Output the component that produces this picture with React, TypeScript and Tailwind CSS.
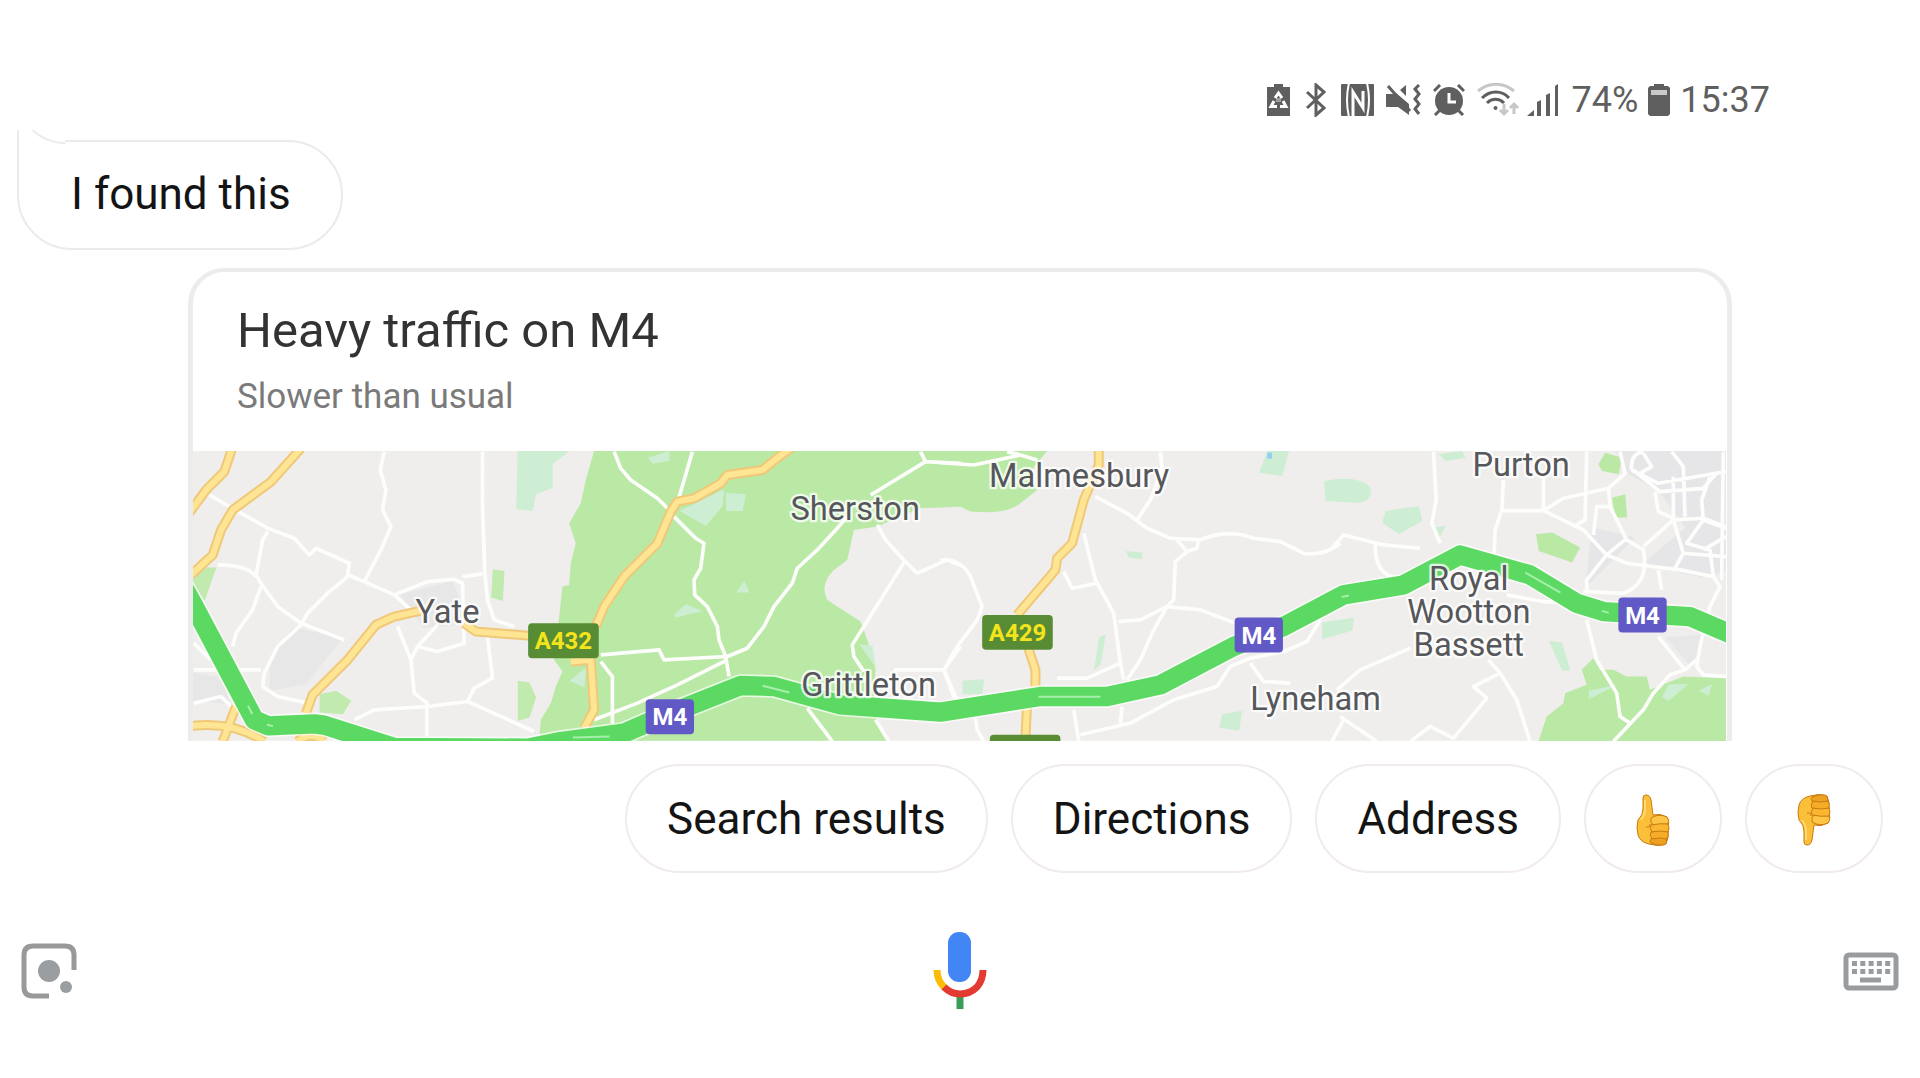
import type { ReactNode } from 'react';

const chips = ['Search results', 'Directions', 'Address'];

const motorway =
  'M-30 407L2 464L184 807L226 825L364 819L394 823L604 890L1004 892L1104 872L1294 847L1404 799L1644 704L1744 707L1944 762L2244 784L2544 737L2744 737L2904 702L3124 587L3274 527L3454 432L3634 402L3804 312L4014 372L4154 457L4234 482L4494 497L4640 560';

function StatusIcons() {
  return (
    <div className="flex items-center text-[#5f5f5f]">
      {/* Battery recycling */}
      <svg className="mr-4 h-8 w-[23px]" viewBox="0 0 23 32" fill="currentColor">
        <path d="M7 0h9v3h7v29H0V3h7z" />
        <g fill="none" stroke="#fff" strokeWidth="3">
          <path d="M8 14L11.500 9L15 14M7 17L4 22.500H10M16 17L19 22.500H13" />
        </g>
        <path d="M9 14h5v4H9z" fill="#fff" opacity=".4" />
      </svg>
      {/* Bluetooth */}
      <svg className="mr-[14px] h-[34px] w-[21px]" viewBox="0 0 21 34" fill="none" stroke="currentColor" strokeWidth="3">
        <path d="M1 9l17 16-8 7V2l8 7L1 25" />
      </svg>
      {/* NFC */}
      <svg className="mr-3 h-8 w-[33px]" viewBox="0 0 33 32">
        <rect width="33" height="32" rx="1" fill="currentColor" />
        <g fill="none" stroke="#fff">
          <path d="M8 -1Q4 16 8 33M26 -1Q30 16 26 33" strokeWidth="2" />
          <path d="M12 33V8L22 24V7" strokeWidth="3" />
        </g>
      </svg>
      {/* Muted, vibrating */}
      <svg className="mr-[11px] h-8 w-9" viewBox="0 0 36 32">
        <path d="M0 10h7l3-1 13 11v11l-11-8H0zM20 1v11l-6-6z" fill="currentColor" />
        <path d="M2 2l22 25" stroke="currentColor" strokeWidth="3" />
        <path d="M33 1l-4 4 4 5-4 5 4 5-4 5 4 5" fill="none" stroke="currentColor" strokeWidth="3" />
      </svg>
      {/* Alarm */}
      <svg className="mr-3 h-8 w-8" viewBox="0 0 32 32">
        <circle cx="16" cy="17" r="14" fill="currentColor" />
        <path d="M1 7l6-6M31 7l-6-6M7 26l-5 5M25 26l5 5" stroke="currentColor" strokeWidth="3" />
        <path d="M16 9v9h7" fill="none" stroke="#fff" strokeWidth="3" />
      </svg>
      {/* Wifi with traffic arrows */}
      <svg className="mr-1 h-[34px] w-[46px]" viewBox="0 0 46 34" fill="none" stroke="currentColor" strokeWidth="3">
        <path d="M1 8C12-1 26-1 37 8" opacity=".35" />
        <path d="M5 15c8-8 20-8 27 0M10 20c5-5 12-5 17 0" />
        <circle cx="18.500" cy="25" r="2" fill="currentColor" stroke="none" />
        <path d="M27 21v9m-4-3l4 4 4-4M37 31v-9m-4 3l4-4 4 4" opacity=".35" />
      </svg>
      {/* Signal */}
      <svg className="mr-[13px] h-8 w-8" viewBox="0 0 32 32" fill="currentColor">
        <path d="M0 32l7-6v6zM10 18l4-2v16h-4zM19 11l4-2v23h-4zM28 2l3-2v32h-3z" />
      </svg>
    </div>
  );
}

function Battery() {
  return (
    <svg className="mx-[10px] h-8 w-[22px]" viewBox="0 0 22 32">
      <path d="M6 0h10v2h4l2 2v26l-2 2H2l-2-2V4l2-2h4z" fill="#5f5f5f" />
      <path d="M3 6h16v5H3z" fill="#c9c9c9" />
    </svg>
  );
}

type ShieldProps = { x: number; y: number; name: string };

function Shield({ x, y, name }: ShieldProps) {
  const isMotorway = name.startsWith('M');
  const width = isMotorway ? 145 : 212;
  return (
    <g>
      <rect x={x} y={y} width={width} height="105" rx="12" fill={isMotorway ? '#6159c6' : '#578c34'} />
      <text
        x={x + width / 2}
        y={y + 78}
        textAnchor="middle"
        fontSize="72"
        fontWeight="700"
        fill={isMotorway ? '#ffffff' : '#f4e41c'}
      >
        {name}
      </text>
    </g>
  );
}

function Town({ x, y, children }: { x: number; y: number; children: ReactNode }) {
  return (
    <text
      x={x}
      y={y}
      textAnchor="middle"
      fontSize="98"
      fill="#56575a"
      stroke="#ffffff"
      strokeOpacity=".8"
      strokeWidth="14"
      strokeLinejoin="round"
      paintOrder="stroke"
    >
      {children}
    </text>
  );
}

function YellowRoad({ d }: { d: string }) {
  return (
    <g fill="none" strokeLinejoin="round">
      <path d={d} stroke="#f0c878" strokeWidth="30" />
      <path d={d} stroke="#fde594" strokeWidth="18" />
    </g>
  );
}

function TrafficMap() {
  return (
    <svg
      className="block h-auto w-full font-['Roboto',sans-serif]"
      viewBox="0 0 4602 870"
      role="img"
      aria-label="Traffic map of the M4"
    >
      <rect width="4602" height="870" fill="#efeeec" />

      {/* Countryside */}
      <g fill="#b9e9a5">
        <path d="M1204 0L1179 87L1164 157L1129 217L1149 277L1134 337L1129 402L1109 407L1099 500L1084 627L1109 662L1089 707L1074 757L1044 807L1039 870H2089L2054 807L2044 727L2049 657L2024 567L2004 512L1904 447Q1880 400 1924 357L1964 327L1984 237L2054 227L2184 172L2304 167L2334 182Q2440 192 2484 157L2534 117L2510 67L2564 0Z" />
        <path d="M4039 872L4064 797L4114 757L4119 727L4184 702L4169 657L4204 622L4224 657L4264 657L4304 677L4364 677L4374 717L4474 677L4602 682V872Z" />
        <path d="M4219 40L4240 5L4290 20L4280 70L4230 60ZM4260 140L4300 130L4305 200L4270 200ZM4032 250L4080 245L4164 290L4140 335L4040 300Z" />
        <path d="M0 350L70 350L35 450L0 400ZM900 355L935 360L930 450L895 440ZM380 730L430 720L475 750L450 790L380 785ZM975 690L1010 695L1030 740L1010 800L975 810Z" opacity=".85" />
      </g>
      <g fill="#cdeed3">
        <path d="M975 0H1130L1080 40L1080 110L1030 130L1020 180L970 175Z" />
        <path d="M3200 65L3225 0H3290L3270 75ZM3395 90Q3500 70 3535 110Q3540 150 3500 155L3400 150ZM3580 180L3680 165L3690 210L3620 250L3570 215ZM3740 10L3810 0L3820 20L3760 30Z" />
        <path d="M3390 515L3485 500L3480 540L3390 565ZM4070 570L4110 575L4135 660L4110 660ZM3090 790L3150 780L3140 840L3080 830ZM2310 690L2375 685L2370 730L2310 730Z" />
        <path d="M2720 560L2740 550L2725 640L2705 660ZM3720 230L3760 225L3740 265ZM2800 300L2850 305L2850 325L2810 320Z" />
        <path d="M1460 180L1595 115L1590 165L1540 225ZM1600 125L1660 130L1650 180L1600 180ZM1365 20L1430 0L1430 30L1380 38ZM1630 425L1655 390L1670 425ZM1445 490L1480 460L1530 480L1450 500ZM2000 580L2040 585L2050 650ZM1130 690L1180 650L1175 710Z" />
        <path d="M4190 720L4280 700L4190 745ZM4410 740L4430 700L4490 700L4430 750ZM4520 720L4560 700L4550 735Z" />
      </g>
      <path d="M3225 5h14v18h-14z" fill="#93cdf5" />

      {/* Built-up areas */}
      <g fill="#e4e4e7">
        <path d="M300 530L450 560L340 700L230 720L230 620ZM0 665L90 680L110 760L0 750ZM620 430L780 390L830 520L690 530Z" opacity=".7" />
        <path d="M4270 0H4602V360L4530 380L4350 340L4480 230L4400 120L4310 70ZM4200 230L4330 260L4180 410Z" opacity=".8" />
        <path d="M4420 560L4540 550L4500 650Z" opacity=".7" />
      </g>

      {/* Minor roads */}
      <g fill="none" stroke="#fdfdfb" strokeWidth="11" strokeLinejoin="round">
        <g transform="translate(-36 -33)">
          <path d="M85 165L260 265L340 295L385 345L405 325L505 370L500 405L550 425L640 465L690 510M610 35L598 90L615 150L605 210L630 260L600 330L550 425M905 35L905 200L912 400L920 480L940 540L1000 560" />
          <path d="M260 275L245 300L225 405L240 430L290 500L360 550L490 600M110 375Q200 375 225 410M240 440L215 510L165 580L155 620M500 410L440 460L380 520L360 555L290 620L250 700L245 740L290 770L380 790M38 690L240 690M38 610L90 660" />
          <path d="M640 465L740 425L820 418L845 430L850 610L770 635L710 620L770 555M845 410L905 402M650 560L690 660L700 760L738 790L738 890M710 620L690 660M920 590L935 715L880 745L860 785L740 800L580 810L520 840M860 785L1060 875M38 790L120 770L150 800" />
        </g>
        <g transform="translate(1104 -33)">
          <path d="M160 35L180 85L210 120L290 175L320 205M395 35L350 190M340 230L405 295L430 310L420 385L400 420L402 465L440 500L470 560L475 600L495 650L505 710M120 645L295 630L310 660L500 650L560 625L610 560L640 500L695 430L710 385L770 330L830 265L860 230M930 165L1095 65L1080 35M1095 65L1200 70" />
          <path d="M500 660L350 735L230 790L100 840M120 665L155 710L155 850M950 255L975 300L1030 360L1070 400L1160 360L1200 375M1035 360L960 480L875 615L880 650L910 695M1000 690L1150 690L1200 620M1150 690L1185 770M740 805L815 905M945 840L985 905" />
        </g>
        <g transform="translate(2244 -33)">
          <path d="M0 68L100 75L240 45L290 60M200 35L240 45M0 360Q60 355 90 410L125 500L110 540L50 620L10 690L40 770L100 800L110 870L130 905M465 170L560 220L620 265L690 295L780 300Q860 265 940 295L1020 305L1090 340Q1150 350 1200 310M660 35L665 90L630 180L590 240M710 300L740 335L770 325L775 295M740 335L705 365L700 480L680 500L600 540L535 545" />
          <path d="M430 280L465 420L520 520L540 670L550 720M370 395L395 445L470 430M680 500L640 570L600 660L560 720M680 500L780 510L885 550M350 715L440 715L540 670M1140 540L1100 605L1030 635L930 655L870 680L830 740L700 780L570 850L420 885M400 810L415 905M545 800L540 850M930 670L970 725L1050 730" />
        </g>
        <g transform="translate(3414 -33)">
          <path d="M0 330L40 285L160 315L270 325M135 315Q135 400 190 410M310 35L318 180L305 250L330 310M520 120L515 210L495 270L492 340M515 212L640 212M640 100L640 212L700 175L835 145L885 100L870 35M640 212L760 270L830 345L770 420L770 450M770 35L765 240L730 260M790 285L800 200L840 200L835 145M840 200L890 300L940 330Q960 430 880 460L760 455" />
          <path d="M830 345L885 300M830 345L890 370L1050 390L1150 410L1170 440L1140 500L1110 620L1100 680L1120 705L1188 710M940 320L1030 240L1120 235L1188 260M985 390L995 450M985 590L1065 690L1020 705L970 760L940 810L850 905M1065 690L1100 660M770 540L800 660L860 760L870 830L900 850" />
          <path d="M905 90Q900 40 940 35M905 90L985 130L1188 95M910 90L990 155L1120 145L1160 100M1025 35L1060 80L1065 230M975 155L985 215L1030 235L1030 110M1140 110L1115 180L1120 240L1188 265M1180 35L1175 420M1030 240L1060 340L1188 350M1060 340L1035 385M1120 240L1070 310L1140 330L1150 410M1188 290L1120 330M940 40L965 80L930 100" />
          <path d="M20 750L90 690L240 625M475 660L510 700L430 740L470 775L370 895L300 860L240 905M510 700L560 780L600 905M30 830L140 905M40 840L5 905M530 465L640 485L740 490" />
        </g>
      </g>

      {/* A roads */}
      <g transform="translate(-36 -33)">
        <YellowRoad d="M20 225L75 150L130 95L155 20" />
        <YellowRoad d="M30 405L95 345L120 270L155 210L270 125L360 25" />
        <YellowRoad d="M375 820L395 765L500 660L585 555L640 530L720 512M850 550L885 575L1050 588" />
        <YellowRoad d="M20 860Q150 840 250 905M125 905L165 800M350 905Q390 870 430 905" />
      </g>
      <g transform="translate(1104 -33)">
        <YellowRoad d="M690 25L655 50L605 90L500 105L480 130L400 175L350 185L330 215L290 310L190 410L130 500L105 560M30 665L90 660L100 810L70 865" />
      </g>
      <g transform="translate(2244 -33)">
        <YellowRoad d="M475 25L475 75L430 180L395 310L350 355L345 390L230 525M262 620L285 690L285 740M260 790L255 895" />
      </g>

      {/* M4 */}
      <g fill="none" strokeLinejoin="round">
        <path d={motorway} stroke="#fff" strokeOpacity=".7" strokeWidth="68" />
        <path d={motorway} stroke="#5cd962" strokeWidth="58" />
        <path
          d="M165 765L178 790M222 822L240 826M1140 860L1250 857M1710 705L1790 725M2538 738H2724M3448 438L3470 434M4000 365L4105 425M4230 480L4250 486"
          stroke="#a5efaa"
          strokeWidth="6"
        />
      </g>

      <Shield x={1006} y={517} name="A432" />
      <Shield x={1359} y={745} name="M4" />
      <Shield x={2369} y={492} name="A429" />
      <Shield x={3127} y={500} name="M4" />
      <Shield x={4279} y={440} name="M4" />
      <rect x="2392" y="852" width="212" height="105" rx="12" fill="#578c34" />

      <Town x={764} y={516}>Yate</Town>
      <Town x={1988} y={208}>Sherston</Town>
      <Town x={2028} y={736}>Grittleton</Town>
      <Town x={2660} y={107}>Malmesbury</Town>
      <Town x={3370} y={778}>Lyneham</Town>
      <Town x={3987} y={75}>Purton</Town>
      <Town x={3830} y={417}>Royal</Town>
      <Town x={3830} y={516}>Wootton</Town>
      <Town x={3830} y={614}>Bassett</Town>
    </svg>
  );
}

function Thumb({ down = false }: { down?: boolean }) {
  return (
    <svg
      className={down ? 'h-[52px] w-[34px] -scale-y-100' : 'h-[52px] w-[34px]'}
      viewBox="0 0 34 52"
      stroke="#c97a12"
      strokeWidth="1"
      strokeLinejoin="round"
    >
      <path
        d="M7 4Q7 1 10 1Q14 1 15 6L17 21Q24 19 31 23Q34 28 32 34Q33 44 30 50Q22 53 13 50Q4 48 2 41Q0 33 2 26Q7 21 7 15Z"
        fill="#fbbf3a"
      />
      <path d="M15 24Q23 19 31 23Q34 26 32 30L17 31Q14 28 15 24Z" fill="#fcc545" />
      <path d="M15 31Q25 29 32 30Q34 34 32 38L16 38Q13 34 15 31Z" fill="#f9b62f" />
      <path d="M15 38Q25 36 32 38Q33 42 31 45L16 45Q13 41 15 38Z" fill="#f5ac28" />
      <path d="M15 45Q24 43 31 45Q31 50 28 51Q20 52 15 49Q13 47 15 45Z" fill="#eea022" />
      <path d="M10 33Q14 34 14 30" fill="none" />
      <path d="M9 6L9 17Q8 22 5 26" fill="none" stroke="#ffda70" strokeWidth="2" />
    </svg>
  );
}

export default function App() {
  return (
    <div className="flex min-h-screen flex-col bg-white font-['Roboto',sans-serif] text-[#141414]">
      <header className="flex h-[130px] items-end justify-end pb-[10px] pr-[150px]">
        <div className="flex h-10 items-center text-4xl text-[#5f5f5f]">
          <StatusIcons />
          <span>74%</span>
          <Battery />
          <time>15:37</time>
        </div>
      </header>

      <main>
        <div className="flex pl-[17px] pt-[10px]">
          <p className="relative flex h-[110px] items-center rounded-[55px] rounded-tl-none border-2 border-[#ebebeb] pb-[3px] pl-[52px] pr-[50px] text-[44px]">
            I found this
            {/* Joins this bubble to the one scrolled away above it */}
            <span className="absolute -left-[2px] -top-3 flex h-[14px] w-12 items-end overflow-hidden border-l-2 border-[#ebebeb] bg-white">
              <span className="-ml-[2px] h-[50px] w-[50px] shrink-0 rounded-bl-[48px] border-b-2 border-l-2 border-[#ebebeb]" />
            </span>
          </p>
        </div>

        <div className="px-[188px] pt-[18px]">
          <article className="rounded-t-[36px] border-x-[5px] border-t-4 border-[#ececec] pr-px">
            <div className="h-[179px] px-11 pt-[31px]">
              <h1 className="text-[49px] leading-[56px] text-[#333]">Heavy traffic on M4</h1>
              <p className="pt-[14px] text-[35px] leading-[48px] text-[#7a7a7a]">Slower than usual</p>
            </div>
            <TrafficMap />
          </article>
        </div>

        <div className="flex flex-wrap justify-end gap-[23px] pr-[37px] pt-[23px]">
          {chips.map((chip) => (
            <button
              key={chip}
              type="button"
              className="h-[109px] rounded-full border-2 border-[#f1eaf1] px-10 pt-[2px] text-[44px]"
            >
              {chip}
            </button>
          ))}
          <button
            type="button"
            aria-label="Good answer"
            className="flex h-[109px] w-[138px] items-center justify-center rounded-full border-2 border-[#f1eaf1] pt-1"
          >
            <Thumb />
          </button>
          <button
            type="button"
            aria-label="Bad answer"
            className="flex h-[109px] w-[138px] items-center justify-center rounded-full border-2 border-[#f1eaf1] pt-1"
          >
            <Thumb down />
          </button>
        </div>
      </main>

      <footer className="flex items-center justify-between px-[21px] pt-[59px]">
        <button type="button" aria-label="Lens">
          <svg className="h-14 w-14" viewBox="0 0 56 56" fill="#9a9ea1">
            <path
              d="M53 27V12Q53 3 44 3H12Q3 3 3 12V44Q3 53 12 53H28"
              fill="none"
              stroke="#999"
              strokeWidth="5"
            />
            <circle cx="28" cy="28" r="11" />
            <circle cx="45" cy="44" r="6" />
          </svg>
        </button>
        <button type="button" aria-label="Speak">
          <svg className="h-[78px] w-[54px]" viewBox="0 0 54 78" fill="none" strokeWidth="7">
            <rect x="15" y="0" width="23" height="50" rx="11" fill="#4285f4" />
            <path d="M27 64V77" stroke="#3c9d58" />
            <path d="M4 38Q4 49 12 56" stroke="#fbbc05" />
            <path d="M11 55Q18 62 27 62Q37 62 44 55Q50 48 50 38" stroke="#e33b32" />
          </svg>
        </button>
        <button type="button" aria-label="Keyboard">
          <svg className="h-10 w-14" viewBox="0 0 56 40">
            <rect x="3" y="4" width="50" height="33" rx="3" fill="none" stroke="#999c9f" strokeWidth="5" />
            <path d="M9 12.500h40M9 20.500h40" stroke="#999c9f" strokeWidth="5" strokeDasharray="5 3.300" />
            <path d="M17 29h21" stroke="#999c9f" strokeWidth="5" />
          </svg>
        </button>
      </footer>
    </div>
  );
}
